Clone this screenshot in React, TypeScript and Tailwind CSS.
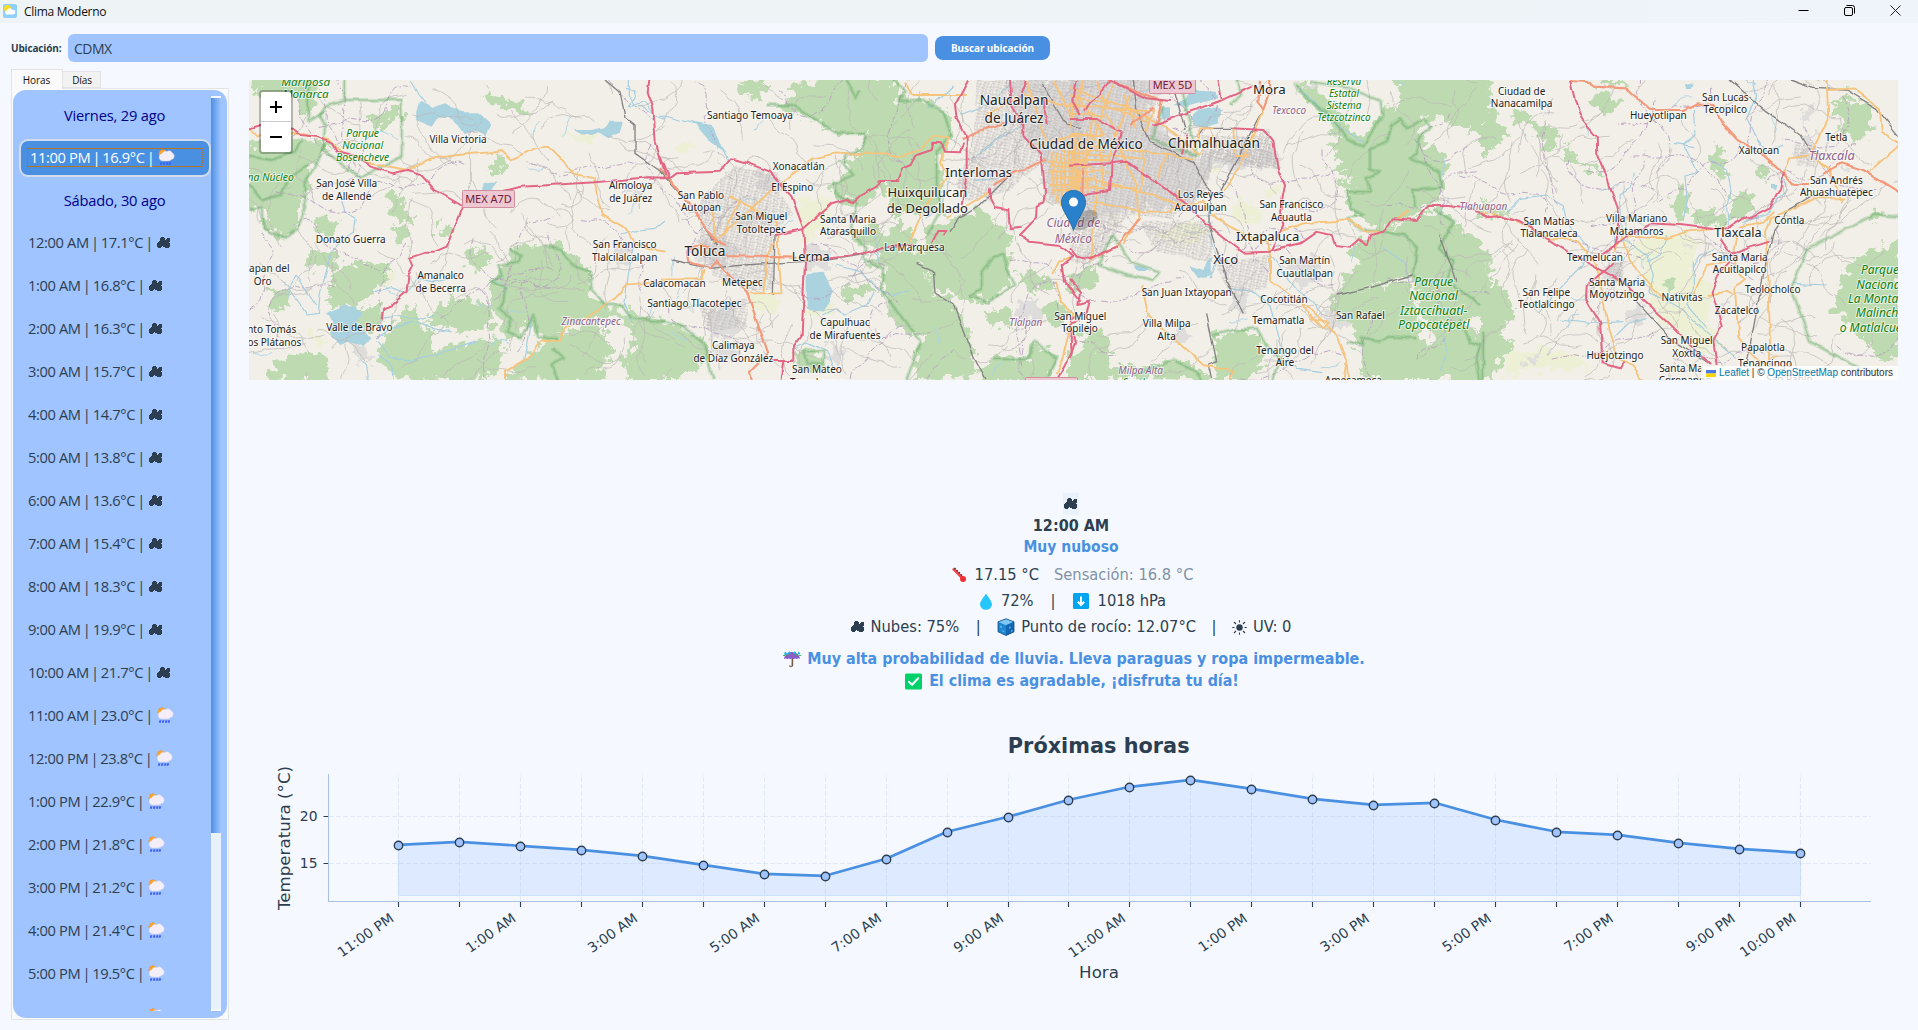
import React from "react";

/* ---------- hourly data ---------- */

type Hour = { time: string; temp: string; rain?: boolean };

const saturday: Hour[] = [
  { time: "12:00 AM", temp: "17.1" },
  { time: "1:00 AM", temp: "16.8" },
  { time: "2:00 AM", temp: "16.3" },
  { time: "3:00 AM", temp: "15.7" },
  { time: "4:00 AM", temp: "14.7" },
  { time: "5:00 AM", temp: "13.8" },
  { time: "6:00 AM", temp: "13.6" },
  { time: "7:00 AM", temp: "15.4" },
  { time: "8:00 AM", temp: "18.3" },
  { time: "9:00 AM", temp: "19.9" },
  { time: "10:00 AM", temp: "21.7" },
  { time: "11:00 AM", temp: "23.0", rain: true },
  { time: "12:00 PM", temp: "23.8", rain: true },
  { time: "1:00 PM", temp: "22.9", rain: true },
  { time: "2:00 PM", temp: "21.8", rain: true },
  { time: "3:00 PM", temp: "21.2", rain: true },
  { time: "4:00 PM", temp: "21.4", rain: true },
  { time: "5:00 PM", temp: "19.5", rain: true },
  { time: "6:00 PM", temp: "18.3", rain: true },
];

/* ---------- icons ---------- */

function CloudIcon() {
  return (
    <svg className="h-[12px] w-[14px] shrink-0" viewBox="0 0 14 12" fill="#2c3e50">
      <path d="M4 0h3v1h1v2h1V2h1V1h3v4h-1v1h1v4h-1v1H8v-1H6V9H5v1H4v1H1v-1H0V6h1V5h1V4h1V1h1z" />
    </svg>
  );
}

function RainIcon() {
  return (
    <svg className="h-[17px] w-[17px] shrink-0" viewBox="0 0 17 17">
      <circle cx="5" cy="4.8" r="4" fill="#f9a72b" />
      <path d="M2 2.6l1-1.2M5 1V.2M.9 5H.2" stroke="#f47b20" strokeWidth="1" />
      <path d="M4.3 11.9a3.7 3.7 0 0 1-.6-7.200A4.8 4.8 0 0 1 9 2.4c1.300-1 4.100-.9 5 1.300 1.700.7 2.400 2.200 2.200 3.700-.3 1.600-1.300 3-2.900 3.200-.6 1-1.900 1.300-3 1.300z" fill="#f4eef8" stroke="#d9cfe2" strokeWidth=".4" />
      <path d="M3.600 13.300l-.9 2.500M6.600 13.300l-.9 2.500M9.600 13.300l-.9 2.500M12.300 13.300l-.9 2.500" stroke="#3f5efb" strokeWidth="1.900" />
    </svg>
  );
}

function ThermometerIcon() {
  return (
    <svg className="h-[16px] w-[14px]" viewBox="1 0 14 16">
      <path d="M2 1.500l9.500 9.500" stroke="#f2464a" strokeWidth="3" />
      <path d="M3.500 1l8 8" stroke="#2b2b33" strokeWidth="1.300" strokeDasharray="1.500 1.500" />
      <circle cx="12" cy="12" r="3" fill="#f2302f" />
    </svg>
  );
}

function DropIcon() {
  return (
    <svg className="h-[17px] w-[14px]" viewBox="0 0 14 17">
      <path d="M7 .5C8.500 3.500 13 8 13 11.300a5.700 5.200 0 0 1-12 0C1 8 5.500 3.500 7 .5z" fill="#26c6fb" />
    </svg>
  );
}

function DownBoxIcon() {
  return (
    <svg className="h-4 w-4" viewBox="0 0 16 16">
      <rect width="16" height="16" rx="1.500" fill="#00a4ef" />
      <path d="M8 3.500v8M4.800 8.700L8 12l3.200-3.300" stroke="#fff" strokeWidth="2" fill="none" />
    </svg>
  );
}

function IceIcon() {
  return (
    <svg className="h-[18px] w-[18px]" viewBox="0 0 18 18">
      <path d="M9 .8l8 3v10L9 17.500l-8-3.700v-10z" fill="#1f86d2" />
      <path d="M9 .8l8 3-8 3.400-8-3.400z" fill="#7cc8f6" />
      <path d="M9 7.200l8-3.400v10L9 17.500z" fill="#1468b3" />
      <path d="M3 7.500l2 .8v2l-2-.8zM5.500 12l1.800.8v1.800l-1.800-.8zM12 9l1.600-.7v1.700l-1.600.7zM14 12.500l1.500-.7v1.500l-1.500.7z" fill="#59b4ec" />
      <path d="M1 3.800v10L9 17.500l8-3.700v-10L9 .8z" fill="none" stroke="#174a78" strokeWidth=".8" />
    </svg>
  );
}

function SunIcon() {
  return (
    <svg className="h-[15px] w-[15px]" viewBox="0 0 15 15">
      <circle cx="7.500" cy="7.500" r="3.200" fill="#2c3e50" />
      <path d="M7.500.3v2.200M7.500 12.500v2.200M.3 7.500h2.200M12.500 7.500h2.200M2 2l2 2M11 11l2 2M2 13l2-2M11 4l2-2" stroke="#2c3e50" strokeWidth="1.100" />
    </svg>
  );
}

function UmbrellaIcon() {
  return (
    <svg className="h-[18px] w-[18px]" viewBox="0 0 18 18">
      <path d="M8.600 8h1.600v7c0 3-4.200 2.800-4.200.6h1.400c0 1.100 1.200 1.100 1.200-.4z" fill="#7b5a41" />
      <path d="M1 9C1.500 4.700 5 2 9.200 2S16.600 5 17 9c-.8-.9-2.200-.9-3 .2-1-1-2.400-1-3.200 0-1-.8-2.400-.8-3.300 0-1-1-2.400-1-3.200 0-.8-1-2.400-1.100-3.300-.2z" fill="#8a5fc4" />
      <path d="M1 3.500l1.500-2 1.500 2a1.500 1.500 0 0 1-3 0zM5 3l1.300-2L7.600 3a1.300 1.300 0 0 1-2.600 0zM10.500 3l1.200-2L13 3a1.300 1.300 0 0 1-2.500 0zM14.500 3.500l1.200-2 1.500 2a1.400 1.400 0 0 1-2.700 0z" fill="#1eb4e8" />
      <path d="M0 5.500h2M16 5.500h2M4 4.500h1.500M13.200 4.700h1.300" stroke="#2bd23a" strokeWidth="1.200" />
    </svg>
  );
}

function CheckIcon() {
  return (
    <svg className="h-[17px] w-[17px]" viewBox="0 0 17 17">
      <rect y=".5" width="17" height="16" rx="1.500" fill="#00d26a" />
      <path d="M4 8.800l3 3 6.200-6.500" stroke="#fff" strokeWidth="2" fill="none" strokeLinecap="round" />
    </svg>
  );
}

/* ---------- window chrome ---------- */

function TitleBar() {
  return (
    <header className="flex h-[23px] items-center bg-gradient-to-r from-[#eef4f6] via-[#eef3f6] to-[#eff4fb] pl-[3px]">
      <svg className="-mt-px h-[14px] w-[14px]" viewBox="0 0 14 14">
        <rect width="14" height="14" rx="2" fill="#8fd0fb" />
        <circle cx="4.500" cy="4.500" r="3.500" fill="#fbdc25" />
        <path d="M3.500 10.500a2 2 0 0 1 .3-3.900 3 3 0 0 1 5.600-.6 2.300 2.300 0 0 1 1.300 4.500z" fill="#fff" />
      </svg>
      <span className="ml-[7px] grow font-['Open_Sans',sans-serif] text-[12px] leading-none tracking-[-0.3px] text-[#111]">Clima Moderno</span>
      <div className="-mt-[2px] flex items-center gap-[35px] pr-[17px]">
        <svg className="h-[11px] w-[11px]" viewBox="0 0 11 11"><path d="M.5 5.500h10" stroke="#000" /></svg>
        <svg className="h-[11px] w-[11px]" viewBox="0 0 11 11" fill="none" stroke="#000">
          <rect x=".5" y="2.500" width="8" height="8" rx="1.500" />
          <path d="M2.500.5H8.500a2 2 0 0 1 2 2V8.500" />
        </svg>
        <svg className="h-[11px] w-[11px]" viewBox="0 0 11 11"><path d="M.5.5l10 10M10.500.5l-10 10" stroke="#222" /></svg>
      </div>
    </header>
  );
}

function SearchBar() {
  return (
    <div className="flex h-[50px] items-center pl-[11px]">
      <span className="w-[57px] font-['Open_Sans',sans-serif] text-[10px] font-bold leading-none tracking-[-0.15px] text-[#2c3e50]">Ubicación:</span>
      <div className="flex h-[28px] w-[860px] items-center rounded-[6px] bg-[#a0c4ff] pl-[6px] pt-px font-['Open_Sans',sans-serif] text-[14px] tracking-[-0.5px] text-[#2c3e50]">CDMX</div>
      <button className="ml-[7px] h-[24px] w-[115px] rounded-[8px] bg-[#4a90e2] font-['Open_Sans',sans-serif] text-[10px] font-bold leading-none tracking-[-0.1px] text-white">Buscar ubicación</button>
    </div>
  );
}

/* ---------- sidebar ---------- */

function Pipe() {
  return <span className="-mx-[1.300px]">|</span>;
}

function HourRow({ hour, selected }: { hour: Hour; selected?: boolean }) {
  const body = (
    <>
      <span className="whitespace-pre">{hour.time} <Pipe /> {hour.temp}°C <Pipe /></span>
      <span className="ml-[5px] flex">{hour.rain ? <RainIcon /> : <CloudIcon />}</span>
    </>
  );
  if (selected) {
    return (
      <div className="flex h-[43px] shrink-0 items-center pt-[2px]">
        <div className="ml-[6px] flex h-[38px] w-[192px] items-center rounded-[9px] border-2 border-[#d3dcec] bg-[#4a90e2] pl-[6px] text-white">
          <div className="flex h-[19px] w-[176px] items-center border border-dotted border-[#b07020] pl-[2px]">{body}</div>
        </div>
      </div>
    );
  }
  return <div className="flex h-[43px] shrink-0 items-center pl-[15px] text-[#2c3e50]">{body}</div>;
}

function Sidebar() {
  return (
    <aside className="flex w-[218px] flex-col">
      <div className="flex h-[19px] items-end font-['Open_Sans',sans-serif] text-[10px] leading-none tracking-[-0.1px] text-[#111]">
        <div className="z-10 -mb-px flex h-[20px] w-[52px] items-center justify-center border border-b-0 border-[#e3e3e3] bg-[#fafafa] pr-px">Horas</div>
        <div className="flex h-[17px] w-[38px] items-center justify-center border border-l-0 border-[#e3e3e3] bg-[#f2f2f2] pl-px pt-px">Días</div>
      </div>
      <div className="flex h-[932px] rounded-[1px] border border-[#e2e4e8] bg-[#f9fafc] p-px">
        <div className="flex grow overflow-hidden rounded-[13px] bg-[#a0c4ff] pb-[7px] pt-[6px]">
          <div className="flex w-[198px] flex-col overflow-hidden font-['Open_Sans',sans-serif] text-[14.700px] leading-none tracking-[-0.38px]">
            <div className="flex h-[39px] shrink-0 items-center justify-center pl-[5px] tracking-[-0.2px] text-[#00008b]">Viernes, 29 ago</div>
            <HourRow hour={{ time: "11:00 PM", temp: "16.9", rain: true }} selected />
            <div className="flex h-[43px] shrink-0 items-center justify-center pl-[5px] pt-[2px] tracking-[-0.2px] text-[#00008b]">Sábado, 30 ago</div>
            {saturday.map((h) => <HourRow key={h.time} hour={h} />)}
          </div>
          <div className="flex w-[10px] flex-col">
            <div className="h-[2px] bg-[#f5f9ff]" />
            <div className="h-[735px] bg-gradient-to-r from-[#4a90e2] to-[#a0c4ff]" />
            <div className="grow border-b-2 border-[#f5f8ff] bg-[#e9f1fb]" />
          </div>
        </div>
      </div>
    </aside>
  );
}

/* ---------- map ---------- */

type Label = [string, number, number, number?, ("park" | "area")?];
type Sector = {
  x: number;
  forest: string[];
  field?: string[];
  urban: string[];
  grid: string[];
  water: string[];
  stream: string[];
  park: string[];
  motorway: string[];
  trunk: string[];
  primary: string[];
  rail: string[];
  labels: Label[];
};

const sectors: Sector[] = [
  {
    x: 245,
    forest: [
      "M0 225L60 175L140 190L215 200L240 180L250 230L215 260L190 290L195 340L165 370L160 400L130 430L80 400L0 400Z",
      "M0 0L210 0L200 110L165 115L150 70L60 50L30 60Z",
      "M60 395L155 385L150 475L110 485L60 455Z",
      "M370 125L430 105L465 95L475 125L430 135L400 170Z",
      "M430 340L462 350L480 410L510 430L470 450L430 390Z",
      "M575 450L620 460L600 492L575 480Z",
      "M720 50L760 60L830 90L845 115L780 105L730 80Z",
      "M752 235L780 250L765 305L735 290Z",
      "M205 420L260 425L275 460L250 490L210 470Z",
      "M200 530L290 520L270 580L170 575L180 550Z",
      "M265 600L320 560L440 565L410 640L330 690L300 700L240 680Z",
      "M75 640L130 640L125 700L80 710Z",
      "M670 530L720 510L740 560L700 590L670 570Z",
      "M735 610L790 560L800 520L850 505L900 510L940 500L990 550L1040 590L1030 640L1060 690L1160 710L1280 745L1280 915L1150 920L1140 850L1175 790L1120 720L1000 740L960 750L920 800L880 790L850 740L830 790L790 800L770 740L735 690Z",
      "M540 740L590 690L640 665L740 690L745 760L640 765Z",
      "M120 845L190 825L250 850L250 920L60 920L80 870Z",
      "M330 710L400 690L420 740L380 770L345 750Z",
      "M420 770L500 700L550 760L560 830L700 790L770 800L770 870L700 920L480 920L400 860Z",
      "M940 780L1040 740L1080 780L1100 830L1060 920L780 920L830 860L900 800Z",
      "M440 450L500 470L480 510L450 500Z",
    ],
    field: ["M950 170L1060 180L1050 210L960 190Z", "M420 590L445 600L440 640L420 630Z", "M190 770L240 790L230 820L195 800Z"],
    urban: ["M322 800L370 815L382 860L340 850L320 825Z", "M1110 500L1160 510L1150 580L1115 580Z", "M450 300L470 300L468 330L455 325Z", "M1140 340L1190 340L1190 362L1150 360Z"],
    grid: [],
    water: [
      "M525 80L560 98L600 85L650 112L700 112L740 150L725 180L690 165L660 178L640 150L610 125L580 125L560 155L510 135Z",
      "M985 165L1040 165L1080 155L1090 140L1130 140L1120 175L1090 190L1060 172L1040 182L1010 178Z",
      "M240 715L300 690L330 693L350 715L335 740L380 795L350 810L310 800L285 810L255 775L265 740Z",
      "M715 325L735 320L760 320L740 345L715 345Z",
    ],
    stream: [
      "M290 375L300 410L330 430L325 470L260 530L240 600L225 660L220 715L190 720L130 640L150 600",
      "M150 600L180 640L215 690", "M380 655L440 640L480 655L520 610L560 620L650 600",
      "M395 790L440 760L500 740L560 760L620 770", "M410 730L470 720L530 735L570 720", "M400 800L440 850L500 860L600 830L700 800",
      "M340 840L365 870L370 915", "M400 840L440 870L445 915", "M1165 510L1150 600L1140 680L1160 745", "M1130 480L1180 465L1230 460L1260 435",
      "M860 730L850 800L840 850", "M495 15L520 60L540 85", "M1150 15L1150 60L1170 90L1200 80L1230 120L1260 130", "M1140 40L1165 45L1170 70L1150 95L1190 95L1220 115",
    ],
    park: [
      "M298 15V75H470V245L345 308L235 225L240 150L225 120L245 90L298 75", "M12 245L80 255L150 230L170 190", "M12 402H50L55 460L120 488L160 460L180 400L175 330L205 290L240 210",
      "M12 330L50 375L110 360L130 310L190 270", "M790 520L830 545L820 560L760 570L770 600L740 620L780 640L775 680L760 700L800 730L785 770L830 790L865 720L880 790L940 790",
      "M900 510L950 530L990 575L1035 590L1040 640L1080 690L1130 690L1160 730L1260 740", "M920 820L960 850L920 870L940 915", "M190 15L190 140L240 110",
    ],
    motorway: [
      "M12 160L45 150L145 165L165 180L215 185L260 205L275 230L330 245L380 275L440 295L490 285L525 297L570 345L652 393L605 515L570 530L540 530L495 545L505 570L490 600L485 650L440 690L415 700L410 735",
      "M775 347L830 335L1050 322L1210 307L1262 308", "M1213 15L1208 50L1225 100L1232 200L1262 300",
    ],
    trunk: [],
    primary: [
      "M12 160L35 185L60 170L180 178L250 195L310 250L400 270L490 285L560 250L640 240L730 232L770 225L800 253L870 220L910 215L940 245L985 295L1050 310L1055 360L1070 420L1140 460L1170 505L1210 522L1262 530",
      "M1262 620L1150 628L1110 670L1020 730L960 755L945 795L890 800L850 850L780 890L780 915",
    ],
    rail: ["M1083 15L1125 50L1140 125L1170 150L1170 235L1220 270L1262 300"],
    labels: [
      ["Mariposa", 182, 19, 35, "park"], ["Monarca", 182, 57, 35, "park"],
      ["Parque", 353, 174, 31, "park"], ["Nacional", 353, 209, 31, "park"], ["Bosencheve", 353, 245, 31, "park"],
      ["na Núcleo", 77, 305, 31, "park"], ["San José Villa", 305, 326], ["de Allende", 305, 363], ["Villa Victoria", 639, 192],
      ["Donato Guerra", 317, 492], ["Amanalco", 587, 602], ["de Becerra", 587, 639], ["apan del", 73, 581], ["Oro", 53, 619],
      ["Valle de Bravo", 343, 757], ["nto Tomás", 80, 763], ["os Plátanos", 88, 801], ["Almoloya", 1157, 332], ["de Juárez", 1157, 370],
      ["San Francisco", 1139, 508], ["Tlalcilalcalpan", 1139, 546], ["Zinacantepec", 1038, 738, 30, "area"],
    ],
  },
  {
    x: 660,
    forest: [
      "M390 35L540 0L720 0L700 70L790 75L860 110L875 180L850 235L820 245L850 300L840 390L800 420L700 420L680 330L610 390L520 370L515 330L560 300L550 250L610 230L615 175L530 175L440 120L350 100L400 60Z",
      "M570 480L640 440L680 480L720 430L770 500L700 530L600 510Z",
      "M540 630L620 620L665 640L620 660L550 680Z", "M230 20L330 15L300 80L250 60Z",
      "M610 560L660 530L860 530L780 570L825 650L905 710L960 900L760 920L780 800L800 780L740 780L680 700L670 580Z",
      "M800 450L880 430L960 400L1060 480L1040 540L1060 600L1040 640L930 680L820 640L780 560Z",
      "M940 560L1030 540L1045 620L1000 680L940 665Z", "M980 720L1050 690L1060 760L990 750Z",
      "M960 900L1000 850L1100 850L1130 800L1200 850L1160 915L960 920Z", "M0 735L60 750L130 800L150 830L60 915L0 915Z", "M400 820L500 850L490 880L410 890Z",
      "M1070 590L1150 590L1180 640L1110 650Z", "M1140 700L1200 680L1240 720L1180 760Z",
    ],
    field: ["M410 370L500 370L520 440L430 500Z", "M440 690L520 680L510 715L440 715Z", "M60 190L110 200L100 230L60 225Z", "M260 660L360 660L350 720L280 710Z", "M780 810L860 780L870 860L760 880Z"],
    urban: [
      "M100 510L200 480L230 540L180 580L100 560Z", "M220 420L330 400L350 440L230 460Z", "M280 280L350 290L380 350L310 350Z", "M430 500L500 520L520 570L440 590Z", "M1070 680L1140 670L1150 740L1080 740Z",
      "M500 800L560 820L540 870L510 860Z", "M1050 15L1262 15L1262 380L1170 380L1150 260L1100 180L1060 120Z", "M170 800L240 800L230 850L160 850Z", "M140 730L210 680L250 770L160 790Z",
    ],
    grid: [
      "M120 370L230 270L330 300L400 420L340 480L340 640L260 650L160 600L120 480Z", "M950 15L1262 15L1262 400L1150 380L1150 260L1040 350L920 380L890 330L940 200Z", "M120 700L260 670L260 760L140 770Z",
    ],
    water: ["M440 595L490 590L520 650L490 710L440 700Z", "M100 140L155 150L185 210L205 235L150 200L120 165Z"],
    stream: [
      "M0 120L60 135L120 150L180 200L200 240L210 260", "M880 30L850 60L800 100", "M900 120L1000 80L1060 20", "M930 260L1020 190L1090 150", "M960 230L1040 170", "M940 320L1000 310L1060 300",
      "M530 570L600 590L650 640L700 660L750 650", "M490 720L530 700L550 720L620 690L640 650", "M400 820L440 800L500 830L520 880", "M800 430L850 380L870 300", "M640 480L660 560",
    ],
    park: [
      "M320 90L400 90L530 175L615 175L605 225L560 240L555 270L580 300L520 325L525 355L590 385L570 470L620 520L610 550L670 580L665 640L720 720L780 800L740 915", "M700 15L740 50L715 75L790 75L850 110L875 185L830 230L830 330L845 400L800 480",
      "M930 665L965 640L965 590L1000 545L1035 540L1040 580L1065 630L1000 670L985 680L930 665", "M560 15L590 70L600 50", "M0 735L60 750L130 800L160 915", "M1000 850L1100 850L1125 800L1190 850L1165 915", "M430 830L490 830L490 870L440 865Z",
    ],
    motorway: [
      "M0 310L30 310L50 295L180 290L213 250L265 265L330 290L395 365L430 460L435 560L425 780L400 815L400 855L340 855M370 855L362 915", "M0 240L30 310",
      "M345 480L430 462L515 385L560 372L575 385L600 362L650 335L660 318L715 318L730 280L755 270L770 240L815 225L820 203L845 205L855 230L900 232L910 200", "M510 550L560 545L630 530L690 512L760 510M815 505L835 465L860 465L850 480",
      "M925 15L885 90L890 130L920 185L920 300L905 390", "M1050 15L1055 90L1090 150L1090 180L1145 240L1155 350L1150 385L1130 395L1128 430L1080 480L1110 500L1200 510L1240 545L1208 570L1215 620L1262 680", "M990 340L990 370L1005 400L1045 405L1050 460L1085 455",
      "M1190 915L1210 880L1235 830L1230 750L1262 740", "M1250 15L1240 80L1262 120", "M1075 80L1100 15M1150 70L1160 150",
    ],
    trunk: ["M0 280L30 315L90 390L155 480L170 500L200 510", "M80 530L85 560L150 580L170 560L260 650L325 835L270 890L275 915", "M80 530L120 510L160 520", "M180 540L410 545", "M905 190L950 170L1040 140", "M1000 330L1060 295L1160 255"],
    primary: [
      "M160 500L240 430L320 360L395 300L460 250L530 235L600 240L625 230L690 240L730 245L780 225L820 185L870 190L860 215", "M165 490L165 440L150 390M190 480L240 370M210 365L280 400L350 440L360 600L365 655L270 655", "M310 655L320 540L345 500", "M0 613H125L130 585",
      "M735 20L760 60L860 60L920 60", "M860 210L840 260L860 310L790 400L780 430L750 500", "M980 120L1040 90L1090 60", "M1090 60L1262 100M1100 15L1160 200L1262 180M1180 15L1240 130", "M860 430L960 370L990 350",
      "M1180 600L1200 560L1230 550M1190 620L1200 680L1240 720L1210 840L1190 900", "M1165 290H1262M1170 330H1262M1190 230V380M1215 220V400M1240 200V420M1170 310H1262M1165 260L1262 265",
      "M1178 230V360M1203 220V390M1228 210V400M1170 345H1262M1168 275H1262",
    ],
    rail: ["M0 290L100 400L170 510", "M35 555L150 580L250 570L500 555L580 545L670 520", "M340 660L345 480", "M435 580L430 650", "M870 470L900 430L960 390L990 360L1050 300", "M770 565L820 590L825 650L880 690L940 850L975 915", "M1150 30L1220 150L1262 160"],
    labels: [
      ["Santiago Temoaya", 270, 121], ["Xonacatlán", 416, 273], ["El Espino", 397, 336], ["San Pablo", 123, 360], ["Autopan", 123, 397], ["San Miguel", 304, 425], ["Totoltepec", 304, 462],
      ["Santa Maria", 564, 432], ["Atarasquillo", 564, 469], ["La Marquesa", 763, 516], ["Toluca", 135, 528, 41], ["Lerma", 452, 545, 38], ["Metepec", 247, 623], ["Calacomacan", 43, 624], ["Santiago Tlacotepec", 103, 684],
      ["Capulhuac", 555, 743], ["de Mirafuentes", 555, 781], ["Calimaya", 220, 811], ["de Díaz González", 220, 849], ["San Mateo", 471, 883], ["Texcalyacac", 471, 921], ["Huixquilucan", 802, 350, 39], ["de Degollado", 802, 400, 39],
      ["Interlomas", 956, 290, 39], ["Naucalpan", 1062, 73, 41], ["de Juárez", 1062, 127, 41], ["Ciudad de México", 1278, 206, 41], ["Tlalpan", 1097, 742, 30, "area"], ["Ciudad de", 1240, 441, 36, "area"], ["México", 1240, 491, 36, "area"],
    ],
  },
  {
    x: 1070,
    forest: [
      "M960 0L1262 0L1262 150L1220 165L1170 160L1110 130L1060 130L1050 210L1130 220L1120 340L1110 380L1030 420L940 470L890 440L830 400L850 350L820 340L790 320L850 310L780 280L820 260L760 200L810 190L770 170L830 150L880 190L940 100L1000 80Z",
      "M940 470L1110 400L1170 450L1200 520L1262 560L1262 700L1180 740L1230 800L1262 850L1262 915L1050 915L1090 780L1050 720L1030 600L880 640L800 660L830 600L880 560L830 530L880 490Z",
      "M800 660L880 640L1020 620L1050 780L1090 830L1060 915L880 915L860 800L840 740L780 710Z",
      "M1130 450L1200 470L1262 540L1262 560L1200 540L1150 480Z", "M420 790L490 760L560 780L590 840L540 915L430 915L440 830Z", "M0 830L80 810L120 860L200 880L330 850L400 890L410 915L0 915Z", "M20 770L100 760L130 830L60 820Z", "M690 20L760 60L850 170L800 160L690 60Z", "M0 600L70 570L80 640L0 650Z",
    ],
    field: ["M260 470L340 440L410 460L400 500L320 510L260 490Z", "M580 345L620 320L630 360L590 370Z", "M480 390L540 380L590 420L500 440Z", "M1030 350L1090 350L1090 390L1030 410Z", "M510 790L580 790L570 835L520 830Z", "M90 390L150 390L150 425L100 425Z", "M420 270L445 270L445 295L420 290Z"],
    urban: [
      "M0 0L260 0L230 100L300 180L390 260L540 230L560 280L430 270L400 350L320 400L180 400L60 440L0 440Z", "M650 560L740 540L760 620L690 640Z", "M480 650L540 650L530 710L480 700Z", "M760 700L840 720L820 760L770 750Z", "M320 760L370 780L350 810L320 800Z", "M680 20L750 30L740 80L690 70Z", "M560 230L620 230L625 275L570 275Z",
    ],
    grid: [
      "M0 15L280 15L240 150L390 240L600 160L630 280L560 280L430 260L410 350L300 430L180 420L60 570L0 560Z", "M390 180L600 190L620 280L400 250Z", "M210 440L430 440L420 560L260 530Z", "M430 560L600 540L590 640L490 670Z",
    ],
    water: ["M362 130L385 105L440 93L455 105L445 145L400 158L370 150Z", "M355 570L400 585L425 540L425 600L385 610Z", "M275 100L300 100L300 130L275 130Z", "M310 90L350 70L360 45L440 50L445 70L350 95Z", "M190 570L220 575L240 588L205 588Z"],
    stream: ["M600 540L640 590L680 640L730 680L760 720", "M480 640L560 655L600 690L620 760L640 840L680 880L760 890", "M690 40L740 90L800 150L880 200", "M1120 780L1130 830L1110 890", "M940 520L1000 560L1020 620", "M420 480L440 560L420 610"],
    park: [
      "M960 150L950 200L900 220L900 280L930 290L890 310L900 350L835 350L840 400L880 420L830 430L880 465L940 470L1000 480L1040 520L1030 600L1060 620", "M680 30L720 80L780 120L830 190L880 215L900 180L940 120L935 80L840 40L720 20", "M960 150L990 130L1010 160L1060 130L1080 160L1050 180L1040 240L1020 250L1110 290L1120 340L1030 345L1035 400",
      "M1090 400L1150 440L1110 520L1150 560L1130 620L1180 650L1230 690", "M1170 730L1200 800L1230 810L1220 850L1230 915", "M125 480L180 560L270 590L250 615L180 600L85 570L125 480", "M430 780L490 765L560 760L590 810L630 850L610 915", "M190 900L310 855L380 890L390 915", "M280 95L245 190L330 225L380 240L330 15", "M500 15L510 60L480 90", "M830 800L880 810L870 790L930 800L970 785L1040 790",
    ],
    motorway: [
      "M45 110L60 80L85 60L120 15L230 70L300 78M0 132H80L130 160L155 170L150 195L125 260L120 345L50 355L0 375", "M250 150L470 70L545 35M445 15L455 70", "M335 235L355 180", "M490 160L580 165L610 200L625 290L645 330L630 410L640 450L600 530L520 533L400 440L340 380L170 260L120 265L0 272", "M0 520L20 545L60 552L140 515",
      "M605 525L690 505L740 470L785 480L795 510L840 515L870 490L890 510L900 480L940 470L965 430L1040 435L1075 390L1140 390L1200 400L1262 430", "M0 615L30 650L25 690L60 680L50 710L0 740M0 750L15 800L0 845",
    ],
    trunk: ["M110 15L180 40L275 78L260 150M180 150L250 100", "M60 555L140 515L210 430", "M570 15L565 80L580 100L595 60L598 15", "M40 280L35 400"],
    primary: [
      "M0 40L60 60L180 100L280 150L390 240L430 180M40 15L0 160M80 15L140 200L200 330L205 430L160 510M130 30L20 330M180 60L110 260", "M0 200L130 220L215 230L370 250", "M0 310L100 320L220 350L330 390L400 380L440 430L520 480L590 500L600 540L600 620L720 700L800 780L830 860L835 915", "M60 380L220 410L300 410L340 370M70 280L80 370L60 560M290 235L265 310",
      "M460 350L500 290L540 200L580 100", "M630 470L700 445L840 435L890 470L930 470M980 430L1020 410", "M215 630L235 720L310 790L400 870L490 890L480 915", "M700 690L720 730L780 740L760 760L720 720", "M830 860L820 915M490 160L495 240L540 240M380 200L390 160L430 160", "M0 235L210 250M0 90L250 110L230 170",
      "M10 180V430M30 180L25 360M50 170V350M0 255H110M0 290H115M0 335L110 340M90 230L100 330L200 340M160 60L200 160M100 90L240 140M0 65L120 85M220 235L215 350", "M0 180H100M0 220L100 225M0 275H70M0 320H60M18 190V340M40 190V340M62 100V230M0 115L110 125M20 60L100 180",
    ],
    rail: ["M190 15L200 100L240 200L370 260L420 350L420 460L470 620L520 715", "M305 15L345 165M385 180L400 160L490 160M580 100L450 350", "M1110 480L1150 590L1160 620M1030 600L890 640L800 660", "M410 715L440 860L415 870L425 915"],
    labels: [
      ["Mora", 598, 42, 40], ["Texcoco", 657, 105, 30, "area"], ["Reserva", 822, 20, 30, "park"], ["Estatal", 822, 56, 30, "park"], ["Sistema", 822, 92, 30, "park"], ["Tetzcotzinco", 822, 128, 30, "park"],
      ["Chimalhuacán", 432, 203, 41], ["Los Reyes", 392, 359], ["Acaquilpan", 392, 396], ["San Francisco", 664, 388], ["Acuautla", 664, 426], ["Ixtapaluca", 593, 483, 39], ["Xico", 467, 553, 39], ["San Martín", 704, 556], ["Cuautlalpan", 704, 594],
      ["San Juan Ixtayopan", 350, 653], ["Cocotitlán", 642, 673], ["Temamatla", 625, 735], ["San Rafael", 871, 722], ["San Miguel", 31, 723], ["Topilejo", 29, 761], ["Villa Milpa", 290, 746], ["Alta", 290, 784], ["Tenango del", 645, 825], ["Aire", 645, 862],
      ["Milpa Alta", 212, 885, 30, "area"], ["Amecameca", 850, 917], ["Tlahuapan", 1240, 394, 30, "area"], ["Parque", 1091, 619, 37, "park"], ["Nacional", 1091, 661, 37, "park"], ["Iztaccíhuatl-", 1091, 705, 37, "park"], ["Popocatépetl", 1091, 748, 37, "park"], ["San Lorenzo", 240, 922, 30, "park"],
    ],
  },
  {
    x: 1480,
    forest: [
      "M0 60L60 140L100 180L60 200L30 230L0 240Z", "M100 100L200 150L240 180L230 230L190 210L150 150L100 140Z", "M340 60L370 50L430 90L390 105L380 130L340 90Z", "M360 15L420 15L440 35L360 30Z", "M1050 90L1100 60L1160 90L1180 160L1120 210L1080 170L1085 130Z",
      "M690 240L715 200L740 270L740 310L700 290Z", "M750 370L800 350L830 400L800 430L750 430Z", "M590 330L620 350L625 420L600 440L580 400Z", "M830 280L850 270L865 315L835 305Z", "M640 400L740 420L730 460L640 440Z", "M0 640L60 620L110 700L60 780L110 820L60 850L40 915L0 915Z", "M260 200L300 260L370 290L340 300L290 270L250 230Z",
      "M1120 560L1180 520L1262 500L1262 850L1200 850L1120 760L1060 700L1080 630Z", "M550 610L590 600L590 640L560 650Z", "M1150 430L1190 400L1200 440Z", "M0 370L60 400L100 420L0 430Z",
    ],
    field: ["M430 510L560 470L660 490L640 590L700 640L680 740L740 820L640 800L520 720L500 600Z", "M60 840L160 820L300 840L340 880L200 880L80 900Z", "M590 780L690 800L700 840L600 820Z"],
    urban: ["M360 570L410 560L430 600L400 620L370 600Z", "M440 700L490 700L500 740L430 740Z", "M960 100L990 100L1000 130L960 130Z", "M990 170L1010 150L1000 220L980 200Z", "M1090 270L1110 280L1100 300Z", "M610 500L640 520L620 540Z", "M940 230L990 240L980 260L940 250Z", "M130 850L170 840L170 870L130 870Z", "M720 680L750 680L740 700Z", "M870 480L910 490L890 530Z"],
    grid: ["M940 210L1000 200L1010 280L950 270Z", "M380 560L430 560L430 620L380 620Z"],
    water: ["M615 30L635 25L630 45L618 45Z", "M870 330L890 330L885 345L870 342Z"],
    stream: [
      "M640 105L645 180L610 210L650 290L615 300L620 360L610 440", "M585 205L640 215", "M690 250L740 290L750 350L740 400L745 450", "M820 15L830 60L800 130L830 190L860 230L910 210", "M460 290L450 340L420 360L425 440L430 500", "M80 410L120 370L200 360L250 390L260 440L330 520L310 570L240 640L180 710",
      "M430 490L500 540L520 600L510 650L600 700L700 790L770 850", "M560 480L540 540L500 560", "M640 560L640 640L620 690L680 760", "M400 790L440 750L500 730", "M240 735L330 745L430 740", "M940 625L1040 630", "M790 440L860 420L920 340L900 280", "M700 520L660 545L640 580",
    ],
    park: ["M1262 425L1180 420L980 525L935 640L990 800L1110 865L1200 900", "M10 770V915"],
    motorway: [
      "M270 15L285 80L310 140L350 185L352 240L378 300L410 390L420 430L405 520", "M0 412L25 430L65 425L120 440L200 490L280 540L370 590L440 630L560 740L640 820L690 870", "M365 540L440 485L510 445L600 450L700 462L740 460L795 425L810 430L870 400L885 370L900 340L912 295", "M720 490L755 540L800 520L865 500M750 560L720 590L695 650L725 750L700 800L710 870",
      "M400 560L370 590L320 630L318 670L360 740L368 865L420 880L430 860",
    ],
    trunk: ["M270 15L320 18L345 35L435 40L510 105L610 105L650 85L700 90L725 140L770 190L840 235L910 295L940 330L990 330", "M1030 295L1085 265L1150 285L1262 355"],
    primary: [
      "M0 410L100 435L150 460L200 490L290 495L350 570L375 700L385 760L410 850L460 870L490 915", "M400 530L430 485L560 490L620 470L700 462", "M430 500L450 560L540 660L560 665M640 660L680 570L740 560", "M1040 15L1045 130L990 240L930 250L912 300M1045 45L1120 40L1200 100L1205 170L1262 210M1262 210L1170 290", "M1080 385L1090 370L1000 370L940 400L870 430L855 470L865 600L870 800L870 870",
      "M770 480L760 530L770 590L795 615L765 640L775 790L800 820L830 850L860 865L890 840", "M680 660L740 650L760 660", "M1080 375L1050 280L990 250", "M780 455L850 440L880 410",
    ],
    rail: ["M750 15L860 110L960 180L990 230L1020 240M930 15L1000 40L1100 45L1190 100L1262 190", "M470 680L570 790L690 870", "M1000 360L930 400L880 470L850 600L820 760L800 870"],
    labels: [
      ["Ciudad de", 125, 48], ["Nanacamilpa", 125, 86], ["Hueyotlipan", 535, 120], ["San Lucas", 736, 67], ["Tecopilco", 736, 104], ["Tetla", 1069, 186], ["Xaltocan", 837, 227], ["Tlaxcala", 1055, 240, 38, "area"], ["San Andrés", 1069, 315], ["Ahuashuatepec", 1069, 352],
      ["San Matías", 207, 438], ["Tlalancaleca", 207, 475], ["Villa Mariano", 470, 431], ["Matamoros", 470, 468], ["Tlaxcala", 774, 473, 38], ["Contla", 928, 436], ["Texmelucan", 345, 548], ["Santa Maria", 779, 546], ["Acuitlapilco", 779, 584], ["Santa Maria", 411, 621], ["Moyotzingo", 411, 659],
      ["San Felipe", 199, 651], ["Teotlalcingo", 199, 689], ["Nativitas", 606, 666], ["Teolocholco", 878, 643], ["Zacatelco", 771, 707], ["San Miguel", 620, 797], ["Xoxtla", 620, 834], ["Huejotzingo", 405, 842], ["Papalotla", 849, 817], ["Tenancingo", 855, 866], ["Santa Ma", 603, 881], ["Coronango", 615, 917], ["San Pablo", 928, 912],
      ["Parque", 1200, 584, 36, "park"], ["Nacional", 1200, 627, 36, "park"], ["La Montaña", 1200, 669, 36, "park"], ["Malinche", 1200, 713, 36, "park"], ["o Matlalcueyetl", 1200, 756, 36, "park"],
    ],
  },
];

/* Deterministic country lanes and municipal borders. */
function lanes(seed: number, count: number, steps: number, stride: number): string {
  let s = seed;
  const rnd = () => {
    s = (s * 16807) % 2147483647;
    return s / 2147483647;
  };
  const out: string[] = [];
  for (let i = 0; i < count; i++) {
    let x = 249 + rnd() * 1649;
    let y = 80 + rnd() * 300;
    let a = rnd() * Math.PI * 2;
    let d = `M${x.toFixed(1)} ${y.toFixed(1)}`;
    for (let k = 0; k < steps; k++) {
      a += (rnd() - 0.5) * 1.300;
      x += Math.cos(a) * stride;
      y += Math.sin(a) * stride;
      d += `L${x.toFixed(1)} ${y.toFixed(1)}`;
    }
    out.push(d);
  }
  return out.join("");
}

const laneNet = lanes(4711, 400, 9, 7);
const borderNet = lanes(977, 75, 14, 8);
const brookNet = lanes(311, 42, 5, 4);

type LayerKey = "forest" | "field" | "urban" | "grid" | "water" | "stream" | "park" | "motorway" | "trunk" | "primary" | "rail";

function Layer({ name, ...rest }: { name: LayerKey } & React.SVGProps<SVGGElement>) {
  return (
    <g {...rest}>
      {sectors.map((s) => (
        <g key={s.x} transform={`translate(${s.x} 75) scale(0.333333)`}>
          {(s[name] ?? []).map((d, i) => <path key={i} d={d} />)}
        </g>
      ))}
    </g>
  );
}

function MapLabels() {
  return (
    <g fontFamily="'Noto Sans', sans-serif" textAnchor="middle" paintOrder="stroke" strokeLinejoin="round">
      {sectors.map((s) => (
        <g key={s.x} transform={`translate(${s.x} 75) scale(0.333333)`}>
          {s.labels.map(([text, x, y, size = 30, kind], i) => (
            <text
              key={i}
              x={x}
              y={y + size * 0.38}
              fontSize={size}
              fontStyle={kind ? "italic" : "normal"}
              fill={kind === "park" ? "#118011" : kind === "area" ? "#8d618b" : "#222"}
              stroke="rgba(255,255,255,0.65)"
              strokeWidth="6"
            >
              {text}
            </text>
          ))}
        </g>
      ))}
    </g>
  );
}

function Shield({ x, y, w, text }: { x: number; y: number; w: number; text: string }) {
  return (
    <g>
      <rect x={x} y={y} width={w} height="17" rx="1" fill="#edc8d0" stroke="#d08e9e" />
      <text x={x + w / 2} y={y + 12.500} textAnchor="middle" fontFamily="'Noto Sans', sans-serif" fontSize="11" fill="#70203c">{text}</text>
    </g>
  );
}

function MapView() {
  return (
    <section className="relative h-[300px] w-[1649px] overflow-hidden bg-[#f2efe9]">
      <svg className="block h-[300px] w-[1649px]" viewBox="249 80 1649 300" fill="none" strokeLinejoin="round">
        <defs>
          <filter id="ragged" x="0" y="0" width="100%" height="100%">
            <feTurbulence type="fractalNoise" baseFrequency="0.11" numOctaves="4" seed="4" />
            <feDisplacementMap in="SourceGraphic" scale="22" xChannelSelector="R" yChannelSelector="G" />
          </filter>
          <filter id="wavy" x="0" y="0" width="100%" height="100%">
            <feTurbulence type="fractalNoise" baseFrequency="0.06" numOctaves="2" seed="9" />
            <feDisplacementMap in="SourceGraphic" scale="5" xChannelSelector="R" yChannelSelector="G" />
          </filter>
          <pattern id="streets" width="21" height="19" patternUnits="userSpaceOnUse" patternTransform="rotate(14)">
            <path d="M0 3H21M6 0V19M0 12H13M15 3V19" stroke="#b9b7b6" strokeWidth="1.900" />
          </pattern>
        </defs>

        <g filter="url(#ragged)">
          <rect x="249" y="80" width="1649" height="300" fill="none" />
          <Layer name="field" fill="#eef0d5" />
          <Layer name="urban" fill="#dfdddb" />
          <Layer name="forest" fill="#bddab1" />
        </g>
        <g filter="url(#wavy)">
          <rect x="249" y="80" width="1649" height="300" fill="none" />
          <Layer name="water" fill="#aad3df" />
          <Layer name="stream" stroke="#a5cfe0" strokeWidth="3.500" />
          <path d={brookNet} stroke="#a9d3e4" strokeWidth=".9" />
          <path d={laneNet} stroke="#bcb8b6" strokeWidth=".7" />
          <path d={borderNet} stroke="#b79fc0" strokeWidth=".9" strokeDasharray="6 2 1.500 2" />
          <Layer name="grid" fill="url(#streets)" />
          <Layer name="park" stroke="#68b168" strokeOpacity=".25" strokeWidth="12" />
          <Layer name="park" stroke="#68a868" strokeOpacity=".4" strokeWidth="4" />
          <Layer name="rail" stroke="#858283" strokeWidth="4" />
          <Layer name="primary" stroke="#f6c47c" strokeWidth="5.500" />
          <Layer name="trunk" stroke="#f49a7b" strokeWidth="6.500" />
          <Layer name="motorway" stroke="#e36684" strokeWidth="6" />
        </g>

        <MapLabels />
        <Shield x={462.500} y={190.500} w={52} text="MEX A7D" />
        <Shield x={1149.500} y={76.500} w={46} text="MEX 5D" />
        <Shield x={1025.500} y={377.500} w={52} text="" />

        <ellipse cx="1085" cy="220" rx="14" ry="8" transform="rotate(-35 1085 220)" fill="#000" opacity=".2" />
        <path d="M1073.500 190.500c-7.200 0-12 5.500-12 12 0 5 2.800 9 5.200 13.500 2.600 4.800 5.400 9.500 6.800 14.500 1.400-5 4.200-9.700 6.800-14.500 2.400-4.500 5.200-8.500 5.200-13.500 0-6.500-4.800-12-12-12z" fill="#2a81cb" stroke="#2270ab" />
        <circle cx="1073.500" cy="202" r="4.500" fill="#fff" />
      </svg>

      <div className="absolute left-[10px] top-[10px] flex w-[34px] flex-col overflow-hidden rounded-[4px] border-2 border-black/25 bg-clip-padding">
        <button className="flex h-[30px] items-center justify-center border-b border-[#ccc] bg-white">
          <svg className="h-3 w-3" viewBox="0 0 12 12"><path d="M0 6h12M6 0v12" stroke="#000" strokeWidth="2" /></svg>
        </button>
        <button className="flex h-[30px] items-center justify-center bg-white">
          <svg className="h-3 w-3" viewBox="0 0 12 12"><path d="M0 6h12" stroke="#000" strokeWidth="2" /></svg>
        </button>
      </div>

      <div className="absolute bottom-0 right-0 flex h-[14px] items-center whitespace-pre bg-white/80 px-[5px] font-['Liberation_Sans',sans-serif] text-[10px] leading-none text-[#333]">
        <svg className="mr-[3px] h-[7px] w-[10px]" viewBox="0 0 10 7"><path fill="#4c7be1" d="M0 0h10v3.500H0z" /><path fill="#ffd500" d="M0 3.500h10V7H0z" /></svg>
        <span className="text-[#0078a8]">Leaflet</span>
        <span> | © </span>
        <span className="text-[#0078a8]">OpenStreetMap</span>
        <span> contributors</span>
      </div>
    </section>
  );
}

/* ---------- current conditions ---------- */

function Conditions() {
  return (
    <section className="flex flex-col items-center pr-[3px] font-['DejaVu_Sans_Condensed','DejaVu_Sans',sans-serif] text-[16.350px] leading-none text-[#2c3e50]">
      <div className="mr-[2px] flex h-[22px] w-[16px] items-center justify-center bg-[#e9f1fb]"><CloudIcon /></div>
      <div className="mr-[2px] flex h-[22px] items-center text-[16px] font-bold">12:00 AM</div>
      <div className="mr-[2px] flex h-[22px] items-center text-[15.500px] font-bold text-[#4a90e2]">Muy nuboso</div>
      <div className="-mr-px mt-[5px] flex h-[22px] items-center">
        <ThermometerIcon /><span className="ml-[9px]">17.15 °C</span>
        <span className="ml-[15px] text-[#8192a5]">Sensación: 16.8 °C</span>
      </div>
      <div className="-mr-px mt-[4px] flex h-[22px] items-center">
        <DropIcon /><span className="ml-[8px]">72%</span><span className="mx-[17px]">|</span><DownBoxIcon /><span className="ml-[9px]">1018 hPa</span>
      </div>
      <div className="mr-[2px] mt-[4px] flex h-[22px] items-center">
        <CloudIcon /><span className="ml-[6px]">Nubes: 75%</span><span className="mx-[16.500px]">|</span><IceIcon /><span className="ml-[6px]">Punto de rocío: 12.07°C</span><span className="mx-[15.500px]">|</span><SunIcon /><span className="ml-[6px]">UV: 0</span>
      </div>
      <div className="-mr-[4px] mt-[10px] flex h-[22px] items-center text-[15.950px] font-bold text-[#4a90e2]">
        <UmbrellaIcon /><span className="ml-[6px]">Muy alta probabilidad de lluvia. Lleva paraguas y ropa impermeable.</span>
      </div>
      <div className="flex h-[22px] items-center text-[15.850px] font-bold text-[#4a90e2]">
        <CheckIcon /><span className="ml-[7px]">El clima es agradable, ¡disfruta tu día!</span>
      </div>
    </section>
  );
}

/* ---------- chart ---------- */

const chartY = [845.5, 842.5, 846.5, 850.5, 856.5, 865.5, 874.5, 876.5, 859.5, 832.5, 817.5, 800.5, 787.5, 780.5, 789.5, 799.5, 805.5, 803.5, 820.5, 832.5, 835.5, 843.5, 849.5, 853.5];
const chartX = (i: number) => 398.3 + i * 60.97;
const tickX = (i: number) => Math.floor(chartX(i)) + 0.5;
const tickNames: [number, string][] = [
  [0, "11:00 PM"], [2, "1:00 AM"], [4, "3:00 AM"], [6, "5:00 AM"], [8, "7:00 AM"], [10, "9:00 AM"], [12, "11:00 AM"],
  [14, "1:00 PM"], [16, "3:00 PM"], [18, "5:00 PM"], [20, "7:00 PM"], [22, "9:00 PM"], [23, "10:00 PM"],
];

function Chart() {
  const line = chartY.map((y, i) => `${chartX(i).toFixed(1)},${y - 0.7}`).join(" ");
  return (
    <svg className="block h-[280px] w-[1649px]" viewBox="249 720 1649 280" fontFamily="'DejaVu Sans', sans-serif" fill="#2c3e50">
      <text x="1098.700" y="753" textAnchor="middle" fontSize="20.830" fontWeight="bold">Próximas horas</text>
      <polygon points={`398.500,895.500 ${line} 1800.600,895.500`} fill="#a0c4ff" fillOpacity=".27" stroke="#a0c4ff" strokeOpacity=".35" />
      <g stroke="#b0c4de" strokeOpacity=".3" strokeDasharray="5 2">
        {chartY.map((_, i) => <path key={i} d={`M${tickX(i)} 901V774`} />)}
        <path d="M329 816.500H1871M329 863.500H1871" />
      </g>
      <path d="M328.500 774V901.500H1871" fill="none" stroke="#a9c0de" strokeWidth="1.100" />
      <path d="M323.500 816.500H328M323.500 863.500H328" stroke="#2c3e50" strokeWidth="1.100" />
      {chartY.map((_, i) => <path key={i} d={`M${tickX(i)} 902v5`} stroke="#2c3e50" strokeWidth="1.100" />)}
      <polyline points={line} fill="none" stroke="#4a90e2" strokeWidth="2.700" strokeLinejoin="round" />
      {chartY.map((y, i) => <circle key={i} cx={tickX(i)} cy={y} r="4.200" fill="#a0c4ff" stroke="#2c3e50" strokeWidth="1.400" />)}
      <g fontSize="13.890">
        <text x="317.500" y="821" textAnchor="end">20</text>
        <text x="317.500" y="868" textAnchor="end">15</text>
        {tickNames.map(([i, name]) => (
          <text key={name} textAnchor="end" transform={`translate(${chartX(i) - 3.5} 920.500) rotate(-35)`}>{name}</text>
        ))}
      </g>
      <g fontSize="16.670">
        <text x="1099" y="978" textAnchor="middle">Hora</text>
        <text textAnchor="middle" transform="translate(289.500 838) rotate(-90)">Temperatura (°C)</text>
      </g>
    </svg>
  );
}

export default function App() {
  return (
    <div className="flex h-[1030px] w-[1918px] flex-col overflow-hidden bg-[#f5f9ff]">
      <TitleBar />
      <SearchBar />
      <main className="-mt-[4px] flex pl-[11px]">
        <Sidebar />
        <div className="ml-[20px] mt-[11px] flex flex-col">
          <MapView />
          <div className="mt-[113px] h-[227px]"><Conditions /></div>
          <Chart />
        </div>
      </main>
    </div>
  );
}
